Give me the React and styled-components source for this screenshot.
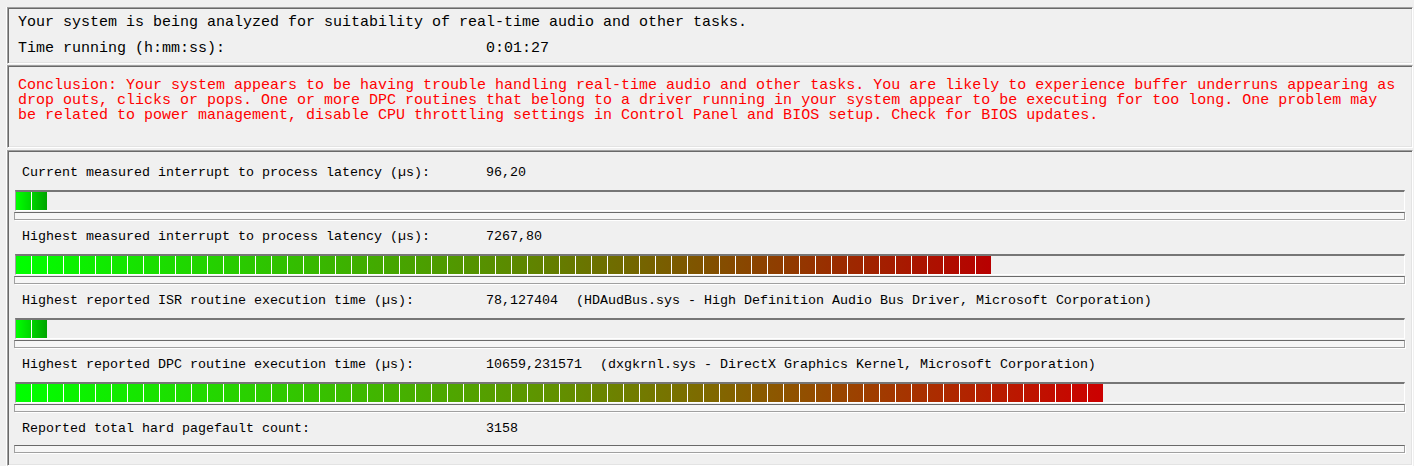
import React from "react";
import styled, { createGlobalStyle } from "styled-components";

const GlobalStyle = createGlobalStyle`
  html, body {
    margin: 0;
    padding: 0;
    background: #f0f0f0;
  }
  body {
    font-family: "Liberation Mono", "DejaVu Sans Mono", monospace;
    color: #000;
  }
`;

const Window = styled.div`
  box-sizing: border-box;
  width: 1414px;
  height: 466px;
  overflow: hidden;
  padding: 7px 1px 0 7px;
  display: flex;
  flex-direction: column;
  background: #f0f0f0;
`;

const Panel = styled.section`
  box-sizing: border-box;
  flex: ${(p) => (p.$grow ? "1 0 auto" : "0 0 auto")};
  height: ${(p) => (p.$height ? `${p.$height}px` : "auto")};
  margin-top: ${(p) => p.$gap || 0}px;
  border-style: solid;
  border-width: 1px;
  border-color: #a0a0a0 #ffffff #ffffff #a0a0a0;
  box-shadow: inset 1px 1px 0 #696969, inset -1px -1px 0 #e3e3e3,
    -1px 0 0 #ffffff;
  padding: ${(p) => p.$pad};
`;

const StatusLine = styled.div`
  display: grid;
  grid-template-columns: 468px auto;
  font-size: 15px;
  line-height: 18px;
  height: 18px;
  white-space: pre;
  margin-top: ${(p) => p.$gap || 0}px;
`;

const Conclusion = styled.p`
  margin: 0;
  width: 1382px;
  font-size: 15px;
  line-height: 15px;
  color: #ff0000;
`;

const Metric = styled.div`
  display: flex;
  flex-direction: column;
  margin-top: ${(p) => p.$gap || 0}px;
`;

const Label = styled.div`
  display: grid;
  grid-template-columns: 464px auto;
  height: 18px;
  padding-top: 2px;
  line-height: 20px;
  font-size: 13.33px;
  padding-left: 7px;
  white-space: pre;
`;

const Detail = styled.span`
  margin-left: 18px;
`;

const Track = styled.div`
  box-sizing: border-box;
  width: 1390px;
  height: 21px;
  margin-top: 9px;
  border-top: 2px solid #767676;
  border-left: 1px solid #a0a0a0;
  border-right: 1px solid #ffffff;
  border-bottom: 1px solid #ffffff;
  background: #f0f0f0;
`;

const Fill = styled.div`
  height: 18px;
  background: repeating-linear-gradient(
      to right,
      transparent 0 15px,
      #ffffff 15px 16px
    ),
    linear-gradient(to right, #00ff00, ${(p) => p.$mid || "#00ff00"}, ${(p) => p.$end});
`;

const Groove = styled.div`
  box-sizing: border-box;
  width: 1391px;
  height: 8px;
  margin-left: -1px;
  margin-top: ${(p) => p.$gap}px;
  border-top: 1px solid #696969;
  border-left: 1px solid #a0a0a0;
  border-right: 1px solid #a0a0a0;
  border-bottom: 1px solid #a0a0a0;
  background: #f6f6f6;
  box-shadow: 1px 1px 0 #ffffff;
`;

const metrics = [
  {
    label: "Current measured interrupt to process latency (µs):",
    value: "96,20",
    cells: 2,
    mid: "#00d400",
    end: "#00a400",
  },
  {
    label: "Highest measured interrupt to process latency (µs):",
    value: "7267,80",
    cells: 61,
    mid: "#5a8c00",
    end: "#b80000",
  },
  {
    label: "Highest reported ISR routine execution time (µs):",
    value: "78,127404",
    detail: "(HDAudBus.sys - High Definition Audio Bus Driver, Microsoft Corporation)",
    cells: 2,
    mid: "#00d400",
    end: "#00a400",
  },
  {
    label: "Highest reported DPC routine execution time (µs):",
    value: "10659,231571",
    detail: "(dxgkrnl.sys - DirectX Graphics Kernel, Microsoft Corporation)",
    cells: 68,
    mid: "#629000",
    end: "#cc0000",
  },
  {
    label: "Reported total hard pagefault count:",
    value: "3158",
  },
];

const App = () => (
  <>
    <GlobalStyle />
    <Window>
      <Panel $height={57} $pad="6px 0 0 10px">
        <StatusLine>
          <span>Your system is being analyzed for suitability of real-time audio and other tasks.</span>
        </StatusLine>
        <StatusLine $gap={8}>
          <span>Time running (h:mm:ss):</span>
          <span>0:01:27</span>
        </StatusLine>
      </Panel>

      <Panel $height={83} $gap={1} $pad="12px 12px 0 10px">
        <Conclusion>
          Conclusion: Your system appears to be having trouble handling real-time audio and other
          tasks. You are likely to experience buffer underruns appearing as drop outs, clicks or
          pops. One or more DPC routines that belong to a driver running in your system appear to
          be executing for too long. One problem may be related to power management, disable CPU
          throttling settings in Control Panel and BIOS setup. Check for BIOS updates.
        </Conclusion>
      </Panel>

      <Panel $grow $gap={2} $pad="10px 0 0 7px">
        {metrics.map((m, i) => (
          <Metric key={m.label} $gap={i === 0 ? 0 : 5}>
            <Label>
              <span>{m.label}</span>
              <span>
                {m.value}
                {m.detail && <Detail>{m.detail}</Detail>}
              </span>
            </Label>
            {m.cells ? (
              <>
                <Track>
                  <Fill
                    $mid={m.mid}
                    $end={m.end}
                    style={{ width: m.cells * 16 - 1 }}
                  />
                </Track>
                <Groove $gap={1} />
              </>
            ) : (
              <Groove $gap={8} />
            )}
          </Metric>
        ))}
      </Panel>
    </Window>
  </>
);

export default App;
